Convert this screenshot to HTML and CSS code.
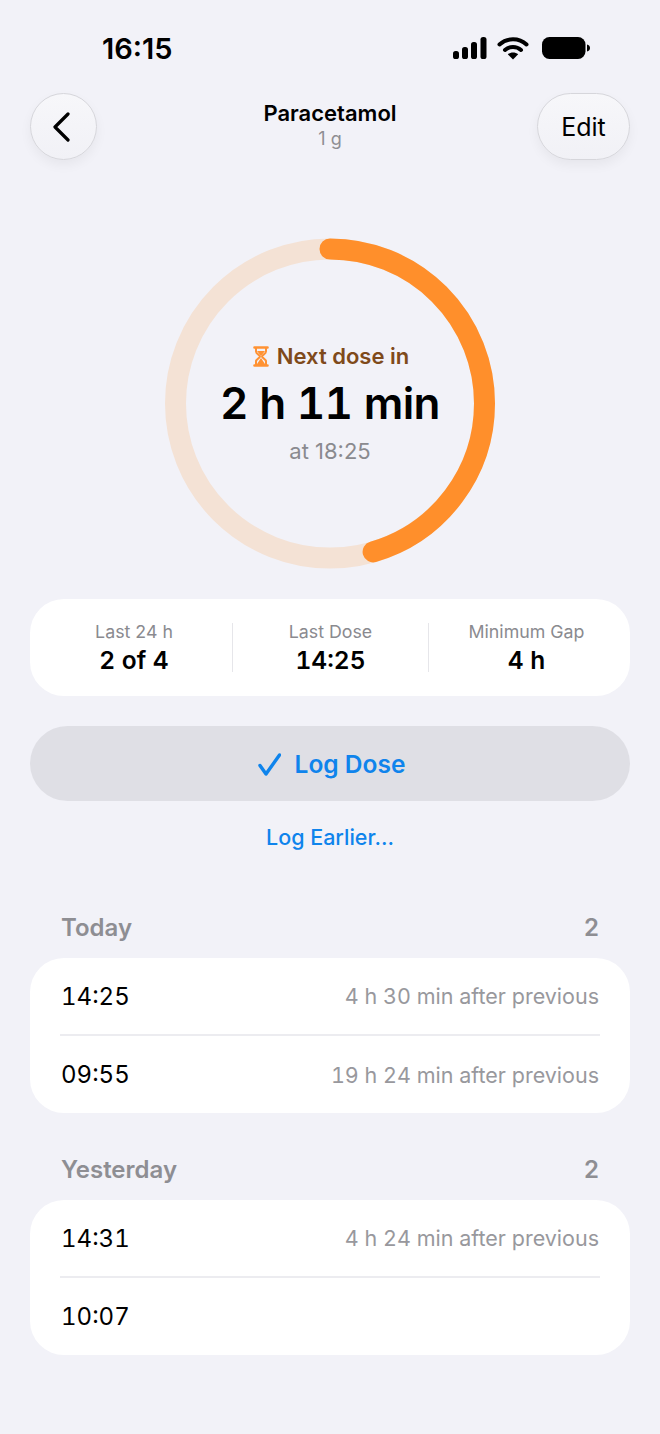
FILE: index.html
```html
<!DOCTYPE html>
<html lang="en">
<head>
  <meta charset="UTF-8">
  <title>Paracetamol</title>
  <link rel="stylesheet" href="styles.css">
</head>
<body>
  <div class="screen">
    <div class="status-bar">
      <span class="clock">16:15</span>
      <div class="status-icons">
        <svg width="36" height="24" viewBox="0 0 36 24">
          <rect x="1" y="15" width="6" height="8" rx="2.6"/>
          <rect x="10" y="11" width="6" height="12" rx="2.6"/>
          <rect x="19" y="6" width="6" height="17" rx="2.6"/>
          <rect x="28.500" y="1" width="6" height="22" rx="2.6"/>
        </svg>
        <svg class="wifi" width="32" height="24" viewBox="0 0 32 24">
          <path d="M2.500 8.500C10 1.500 22 1.500 29.500 8.500" class="wifi-arc"/>
          <path d="M8 14C12.500 10 19.500 10 24 14" class="wifi-arc"/>
          <path d="M16 23.500L10.800 18.300C13.800 15.900 18.200 15.900 21.200 18.300Z"/>
        </svg>
        <svg width="50" height="24" viewBox="0 0 50 24">
          <rect x="1" y="1" width="43.500" height="22" rx="7.500"/>
          <path d="M46 8.500C48 9 49 10.300 49 12C49 13.700 48 15 46 15.500Z"/>
        </svg>
      </div>
    </div>

    <div class="nav">
      <button class="nav-btn back-btn">
        <svg width="20" height="30" viewBox="0 0 20 30"><path d="M16 2L3 15L16 28"/></svg>
      </button>
      <div class="nav-title">
        <div class="med-name">Paracetamol</div>
        <div class="med-dose">1 g</div>
      </div>
      <button class="nav-btn edit-btn">Edit</button>
    </div>

    <div class="ring">
      <svg class="ring-svg" width="330" height="331" viewBox="0 0 330 331">
        <circle cx="165" cy="165.500" r="154.500" class="ring-track"/>
        <circle cx="165" cy="165.500" r="154.500" class="ring-progress" pathLength="100" stroke-dasharray="45.500 100" transform="rotate(-90 165 165.500)"/>
      </svg>
      <div class="ring-text">
        <div class="next-label">
          <svg width="16" height="21" viewBox="0 0 16 21">
            <path d="M1.500 1.500H14.500M1.500 19.500H14.500" class="glass-bar"/>
            <path d="M3 2V5.500C3 8 7 9 7 10.500C7 12 3 13 3 15.500V19H13V15.500C13 13 9 12 9 10.500C9 9 13 8 13 5.500V2" class="glass-line"/>
            <path d="M4 5H12L8 10ZM4 18L8 12L12 18Z" class="glass-fill"/>
          </svg>
          <span>Next dose in</span>
        </div>
        <div class="countdown">2 h 11 min</div>
        <div class="next-time">at 18:25</div>
      </div>
    </div>

    <div class="stats card">
      <div class="stat">
        <div class="stat-label">Last 24 h</div>
        <div class="stat-value">2 of 4</div>
      </div>
      <div class="stat">
        <div class="stat-label">Last Dose</div>
        <div class="stat-value">14:25</div>
      </div>
      <div class="stat">
        <div class="stat-label">Minimum Gap</div>
        <div class="stat-value">4 h</div>
      </div>
    </div>

    <button class="log-btn">
      <svg width="24" height="24" viewBox="0 0 24 24"><path d="M3 13.500L9 22L22.500 3"/></svg>
      <span>Log Dose</span>
    </button>
    <div class="log-earlier">Log Earlier...</div>

    <div class="section-head today-head">
      <span>Today</span>
      <span>2</span>
    </div>
    <div class="card history">
      <div class="row">
        <span class="row-time">14:25</span>
        <span class="row-note">4 h 30 min after previous</span>
      </div>
      <div class="row">
        <span class="row-time">09:55</span>
        <span class="row-note">19 h 24 min after previous</span>
      </div>
    </div>

    <div class="section-head yesterday-head">
      <span>Yesterday</span>
      <span>2</span>
    </div>
    <div class="card history">
      <div class="row">
        <span class="row-time">14:31</span>
        <span class="row-note">4 h 24 min after previous</span>
      </div>
      <div class="row">
        <span class="row-time">10:07</span>
      </div>
    </div>
  </div>
</body>
</html>
```

FILE: styles.css
```css
body {
  margin: 0;
  background: #f2f2f8;
  color: #000;
  font-family: Inter, "Liberation Sans", sans-serif;
}
.screen {
  width: 660px;
  height: 1434px;
  overflow: hidden;
  padding: 0 30px;
  box-sizing: border-box;
}
.status-bar {
  height: 93px;
  display: flex;
  justify-content: space-between;
  align-items: flex-start;
  padding: 32px 39px 0 72px;
  box-sizing: border-box;
}
.clock {
  font-size: 29px;
  line-height: 34px;
  font-weight: 600;
}
.status-icons {
  display: flex;
  align-items: center;
  gap: 9px;
  padding-top: 4px;
}
.wifi {
  margin-right: 3px;
}
.wifi-arc {
  fill: none;
  stroke: #000;
  stroke-width: 4;
  stroke-linecap: round;
}
.nav {
  display: grid;
  grid-template-columns: 1fr auto 1fr;
  align-items: center;
  height: 67px;
}
.nav-btn {
  height: 67px;
  padding: 0;
  border: 1px solid #d6d6db;
  box-sizing: border-box;
  background: linear-gradient(#f7f7fa, #f1f1f6);
  box-shadow: 0 5px 12px rgba(0, 0, 0, 0.05);
  color: #000;
  font-family: inherit;
}
.back-btn {
  width: 67px;
  border-radius: 50%;
  justify-self: start;
  display: flex;
  align-items: center;
  justify-content: center;
}
.back-btn svg {
  margin-right: 3px;
  fill: none;
  stroke: #000;
  stroke-width: 3.2;
  stroke-linecap: round;
  stroke-linejoin: round;
}
.edit-btn {
  width: 93px;
  border-radius: 34px;
  justify-self: end;
  font-size: 25px;
}
.nav-title {
  text-align: center;
  margin-top: -5px;
}
.med-name {
  font-size: 22px;
  line-height: 28px;
  font-weight: 600;
}
.med-dose {
  font-size: 18px;
  line-height: 22px;
  margin-top: 1px;
  color: #8e8e93;
}
.ring {
  display: grid;
  justify-content: center;
  align-items: center;
  margin-top: 78px;
}
.ring-svg, .ring-text {
  grid-area: 1 / 1;
}
.ring-track, .ring-progress {
  fill: none;
  stroke-width: 21;
}
.ring-track {
  stroke: #f4e2d5;
}
.ring-progress {
  stroke: #ff8f2b;
  stroke-linecap: round;
}
.ring-text {
  text-align: center;
}
.next-label {
  display: flex;
  justify-content: center;
  align-items: center;
  gap: 8px;
  font-size: 22px;
  line-height: 28px;
  font-weight: 600;
  color: #7f4a1b;
  padding-left: 2px;
}
.glass-bar {
  fill: none;
  stroke: #ff9233;
  stroke-width: 2.6;
  stroke-linecap: round;
}
.glass-line {
  fill: none;
  stroke: #ff9233;
  stroke-width: 2;
}
.glass-fill {
  fill: #ff9233;
}
.countdown {
  font-size: 44px;
  line-height: 56px;
  font-weight: 600;
  letter-spacing: -0.6px;
  font-kerning: none;
  font-variant-numeric: tabular-nums;
  margin-top: 5px;
}
.next-time {
  font-size: 22px;
  line-height: 28px;
  color: #8a8a8f;
  margin-top: 6px;
}
.card {
  background: #fff;
  border-radius: 34px;
}
.stats {
  display: grid;
  grid-template-columns: repeat(3, 1fr);
  align-items: center;
  height: 97px;
  margin-top: 30px;
  padding: 0 6px;
}
.stat {
  height: 49px;
  text-align: center;
  border-left: 1px solid #e6e6ea;
}
.stat:first-child {
  border-left: none;
}
.stat-label {
  font-size: 17.800px;
  line-height: 18px;
  color: #8a8a8f;
}
.stat-value {
  font-size: 24.500px;
  line-height: 32px;
  margin-top: 3px;
  font-weight: 600;
  font-variant-numeric: tabular-nums;
}
.log-btn {
  display: flex;
  justify-content: center;
  align-items: center;
  gap: 14px;
  width: 100%;
  height: 75px;
  margin-top: 30px;
  padding: 0 0 0 2px;
  border: none;
  border-radius: 38px;
  background: #dfdfe5;
  color: #0f84ec;
  font-family: inherit;
  font-size: 24.500px;
  font-weight: 600;
}
.log-btn svg {
  fill: none;
  stroke: #0f84ec;
  stroke-width: 3.4;
  stroke-linecap: round;
  stroke-linejoin: round;
}
.log-earlier {
  text-align: center;
  margin-top: 22px;
  font-size: 21.500px;
  line-height: 28px;
  font-weight: 500;
  color: #0f84ec;
}
.section-head {
  display: flex;
  justify-content: space-between;
  padding: 0 31px;
  font-size: 24px;
  line-height: 30px;
  font-weight: 600;
  color: #8e8e93;
}
.today-head {
  margin-top: 62px;
  margin-bottom: 15px;
}
.yesterday-head {
  margin-top: 42px;
  margin-bottom: 15px;
}
.history {
  padding: 0 30px;
}
.row {
  display: flex;
  justify-content: space-between;
  align-items: center;
  height: 79px;
  box-sizing: border-box;
  border-top: 2px solid #ececf0;
}
.row:first-child {
  height: 76px;
  border-top: none;
}
.row-time {
  font-size: 24px;
  padding-left: 1px;
  font-variant-numeric: tabular-nums;
}
.row-note {
  font-size: 21.500px;
  padding-right: 1px;
  color: #98989d;
  font-variant-numeric: tabular-nums;
}
```
